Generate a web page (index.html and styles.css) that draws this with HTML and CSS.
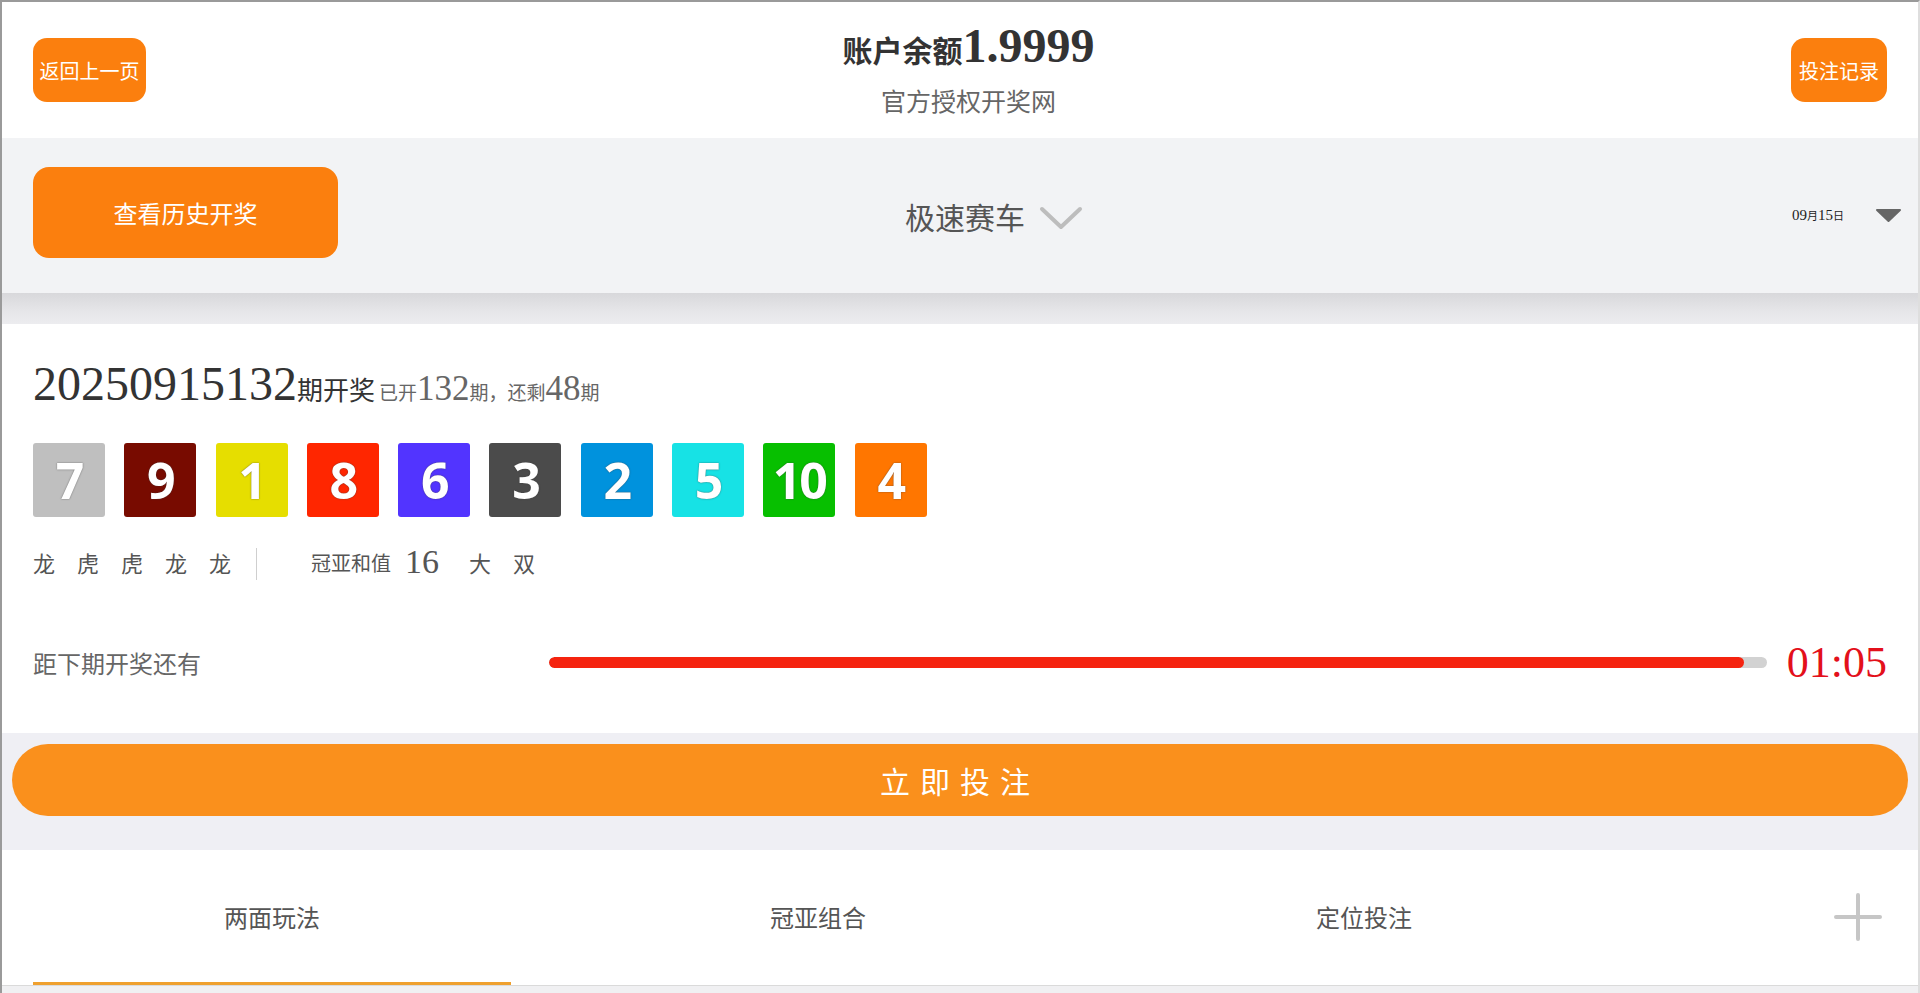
FILE: index.html
```html
<!DOCTYPE html>
<html lang="zh-CN">
<head>
<meta charset="utf-8">
<title>极速赛车</title>
<link rel="stylesheet" href="styles.css">
</head>
<body>
<div class="page">
  <header class="top">
    <div class="pill pill-back">返回上一页</div>
    <div class="title">
      <div class="title-main"><span class="zh">账户余额</span>1.9999</div>
      <div class="title-sub">官方授权开奖网</div>
    </div>
    <div class="pill pill-rec">投注记录</div>
  </header>

  <section class="bar">
    <div class="big-pill">查看历史开奖</div>
    <div class="picker">
      <span>极速赛车</span>
      <svg class="chev" width="44" height="26" viewBox="0 0 44 26"><polyline points="3,4 22,22 41,4" fill="none" stroke="#bdbdbd" stroke-width="4" stroke-linecap="round" stroke-linejoin="round"/></svg>
    </div>
    <div class="date-box">
      <span class="date">09<span class="zh">月</span>15<span class="zh">日</span></span>
      <svg width="27" height="15" viewBox="0 0 27 15"><path d="M2 2 H25 L13.5 13 Z" fill="#666" stroke="#666" stroke-width="2" stroke-linejoin="round"/></svg>
    </div>
  </section>
  <div class="shade"></div>

  <section class="draw">
    <div class="issue">20250915132<span class="zh">期开奖</span><span class="sub"><span class="zh">已开</span>132<span class="zh">期，还剩</span>48<span class="zh">期</span></span></div>
    <div class="balls">
      <div class="ball c7">7</div>
      <div class="ball c9">9</div>
      <div class="ball c1">1</div>
      <div class="ball c8">8</div>
      <div class="ball c6">6</div>
      <div class="ball c3">3</div>
      <div class="ball c2">2</div>
      <div class="ball c5">5</div>
      <div class="ball c10">10</div>
      <div class="ball c4">4</div>
    </div>
    <div class="tags">
      <div class="lh"><span>龙</span><span>虎</span><span>虎</span><span>龙</span><span>龙</span></div>
      <div class="sep"></div>
      <span class="sum-l">冠亚和值</span>
      <span class="sum-n">16</span>
      <span class="sum-t">大</span>
      <span class="sum-t">双</span>
    </div>
    <div class="cd">
      <div class="cd-label">距下期开奖还有</div>
      <div class="track"><div class="fill" style="width:98.1%"></div></div>
      <div class="time">01:05</div>
    </div>
  </section>

  <section class="act">
    <div class="go">立即投注</div>
  </section>

  <nav class="tabs">
    <div class="tab on">两面玩法</div>
    <div class="tab">冠亚组合</div>
    <div class="tab">定位投注</div>
    <svg class="plus" width="50" height="50" viewBox="0 0 50 50"><path d="M25 3 V47 M3 25 H47" stroke="#c6c6c6" stroke-width="4" stroke-linecap="round"/></svg>
  </nav>
  <div class="foot"></div>
</div>
</body>
</html>
```

FILE: styles.css
```css
* { box-sizing: border-box; }
html, body { margin: 0; padding: 0; }
body {
  font-family: "Liberation Serif", "Noto Sans CJK SC", serif;
  background: #f0f0f2;
}
.zh { font-family: "Noto Sans CJK SC", sans-serif; }

.page {
  width: 1920px;
  height: 993px;
  border-top: 2px solid #9a9a9a;
  border-left: 2px solid #9a9a9a;
  border-right: 2px solid #dedede;
  background: #fff;
  overflow: hidden;
  display: flex;
  flex-direction: column;
}

/* header */
.top {
  height: 136px;
  flex: none;
  display: flex;
  align-items: center;
  padding: 0 31px;
  background: #fff;
}
.pill {
  height: 64px;
  background: #fb7f0e;
  border-radius: 14px;
  color: #fff;
  display: flex;
  align-items: center;
  justify-content: center;
  font-family: "Noto Sans CJK SC", sans-serif;
  font-size: 20px;
  white-space: nowrap;
}
.pill-back { width: 113px; }
.pill-rec { width: 96px; }
.title { flex: 1; text-align: center; }
.title-main {
  font-size: 48px;
  font-weight: bold;
  color: #333;
  line-height: 56px;
}
.title-main .zh { font-size: 30px; font-weight: 700; }
.title-sub {
  font-family: "Noto Sans CJK SC", sans-serif;
  font-size: 25px;
  color: #666;
  line-height: 46px;
}

/* selector bar */
.bar {
  height: 155px;
  flex: none;
  background: #f2f3f5;
  display: flex;
  align-items: center;
  padding: 0 16px 0 31px;
}
.big-pill {
  width: 305px;
  height: 91px;
  margin-top: -6px;
  background: #fb7f0e;
  border-radius: 16px;
  color: #fff;
  font-family: "Noto Sans CJK SC", sans-serif;
  font-size: 24px;
  display: flex;
  align-items: center;
  justify-content: center;
}
.picker {
  flex: 1;
  display: flex;
  align-items: center;
  justify-content: center;
  gap: 14px;
  color: #555;
  font-family: "Noto Sans CJK SC", sans-serif;
  font-size: 30px;
  padding-right: 16px;
}
.chev { margin-top: 4px; }
.date-box {
  width: 236px;
  display: flex;
  align-items: center;
  justify-content: flex-end;
  gap: 31px;
}
.date { font-size: 15px; color: #222; }
.date .zh { font-size: 11px; }
.shade {
  height: 31px;
  flex: none;
  background: linear-gradient(#d8d8db, #e6e6e9 60%, #ececef);
}

/* draw info */
.draw {
  height: 409px;
  flex: none;
  padding: 30px 31px 0 31px;
  background: #fff;
}
.issue {
  height: 60px;
  line-height: 60px;
  font-size: 48px;
  color: #333;
  white-space: nowrap;
}
.issue .zh { font-size: 26px; }
.issue .sub {
  font-size: 35px;
  color: #666;
  margin-left: 4px;
}
.issue .sub .zh { font-size: 19px; }
.balls {
  display: flex;
  gap: 19.3px;
  margin-top: 29px;
}
.ball {
  width: 72px;
  height: 74px;
  border-radius: 3px;
  color: #fff;
  font-family: "Open Sans", sans-serif;
  font-weight: 700;
  font-size: 50px;
  letter-spacing: -2px;
  display: flex;
  align-items: center;
  justify-content: center;
  text-shadow: 0 0 1.5px rgba(60, 60, 60, 0.85);
}
.c1 { background: #e6de00; }
.c2 { background: #0092dd; }
.c3 { background: #4b4b4b; }
.c4 { background: #ff7600; }
.c5 { background: #17e2e5; }
.c6 { background: #5234ff; }
.c7 { background: #bfbfbf; }
.c8 { background: #ff2600; }
.c9 { background: #780b00; }
.c10 { background: #07bf00; }

.tags {
  margin-top: 25px;
  height: 40px;
  display: flex;
  align-items: center;
  color: #555;
  font-family: "Noto Sans CJK SC", sans-serif;
  font-size: 22px;
}
.lh { display: flex; gap: 22px; }
.sep {
  width: 1px;
  height: 32px;
  background: #cfcfcf;
  margin: 4px 54px 0 25px;
}
.sum-l { font-size: 20px; }
.sum-n {
  font-family: "Liberation Serif", serif;
  font-size: 34px;
  margin: 0 30px 0 14px;
}
.sum-t { margin-right: 22px; }

.cd {
  margin-top: 50px;
  height: 60px;
  display: flex;
  align-items: center;
}
.cd-label {
  width: 516px;
  flex: none;
  font-family: "Noto Sans CJK SC", sans-serif;
  font-size: 24px;
  color: #666;
}
.track {
  width: 1218px;
  height: 11px;
  flex: none;
  background: #d2d2d2;
  border-radius: 6px;
  overflow: hidden;
}
.fill {
  height: 100%;
  background: #f5230f;
  border-radius: 6px;
}
.time {
  margin-left: auto;
  font-size: 44px;
  color: #e3101b;
}

/* action */
.act {
  height: 117px;
  flex: none;
  background: #efeff4;
  padding: 11px 10px 0 10px;
}
.go {
  height: 72px;
  border-radius: 36px;
  background: #fa901c;
  color: #fff;
  font-family: "Noto Sans CJK SC", sans-serif;
  font-size: 30px;
  letter-spacing: 10px;
  display: flex;
  align-items: center;
  justify-content: center;
}

/* tabs */
.tabs {
  height: 136px;
  flex: none;
  display: flex;
  align-items: stretch;
  gap: 68px;
  padding: 0 35px 0 31px;
  background: #fff;
  border-bottom: 1px solid #dadada;
}
.tab {
  width: 478px;
  display: flex;
  align-items: center;
  justify-content: center;
  font-family: "Noto Sans CJK SC", sans-serif;
  font-size: 24px;
  color: #555;
  border-bottom: 3px solid transparent;
}
.tab.on { border-bottom-color: #efa02e; }
.plus { margin-left: auto; align-self: center; margin-top: -2px; }
.foot { flex: 1; background: #f0f0f2; }
```
